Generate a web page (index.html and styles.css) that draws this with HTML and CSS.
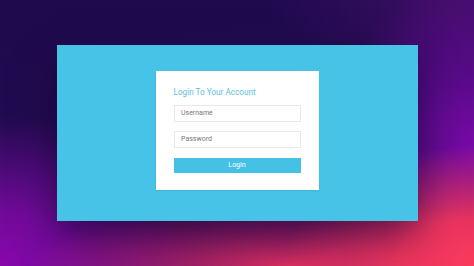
FILE: index.html
```html
<!DOCTYPE html>
<html>
<head>
<meta charset="utf-8">
<link rel="stylesheet" href="styles.css">
</head>
<body>
<div class="bg">
  <div class="panel">
    <form class="card">
      <h2 class="title">Login To Your Account</h2>
      <div class="field">Username</div>
      <div class="field">Password</div>
      <div class="btn">Login</div>
    </form>
  </div>
</div>
</body>
</html>
```
FILE: styles.css
```css
html, body {
  margin: 0;
  padding: 0;
  width: 474px;
  height: 266px;
  overflow: hidden;
}
.bg {
  width: 474px;
  height: 266px;
  box-sizing: border-box;
  padding: 45px 56px 0 56.5px;
  background:
    radial-gradient(ellipse 190px 120px at 474px 266px, #fb3a5c 0%, rgba(245,55,92,0.9) 40%, rgba(220,40,100,0) 100%),
    radial-gradient(ellipse 260px 70px at 290px 266px, rgba(228,48,95,0.95) 0%, rgba(200,35,110,0.5) 60%, rgba(190,30,110,0) 100%),
    radial-gradient(ellipse 200px 150px at 0px 266px, #8807ac 0%, rgba(125,10,165,0.85) 35%, rgba(90,10,140,0) 100%),
    radial-gradient(ellipse 140px 180px at 474px 150px, #7a0aa8 0%, rgba(110,10,160,0.6) 50%, rgba(80,10,130,0) 100%),
    radial-gradient(ellipse 200px 90px at 474px 0px, rgba(70,16,105,0.8) 0%, rgba(60,14,100,0) 100%),
    linear-gradient(170deg, #1f0a4e 0%, #220b50 45%, #3b0e6a 100%);
  font-family: Roboto, "Liberation Sans", sans-serif;
}
.panel {
  width: 361.5px;
  height: 176px;
  background: #46c3e7;
  box-shadow: 0 16px 36px rgba(20, 0, 40, 0.5);
  display: flex;
  justify-content: center;
  align-items: flex-start;
  padding-top: 26px;
  box-sizing: border-box;
}
.card {
  width: 162.5px;
  height: 119px;
  background: #ffffff;
  box-sizing: border-box;
  padding: 16px 18px 0 17.5px;
  margin: 0;
  display: flex;
  flex-direction: column;
  box-shadow: 0 1px 2px rgba(0,0,0,0.08);
}
.title {
  margin: 0 0 7px 0;
  font-weight: 400;
  font-size: 8.2px;
  line-height: 11px;
  color: #62c0dc;
  white-space: nowrap;
}
.field {
  height: 17px;
  border: 1px solid #ebe6ee;
  box-sizing: border-box;
  font-size: 7px;
  line-height: 15px;
  padding-left: 6.5px;
  color: #777777;
  margin-bottom: 9px;
}
.field + .field {
  margin-bottom: 9.5px;
}
.btn {
  height: 15.5px;
  background: #45c1e6;
  color: #ffffff;
  font-size: 7px;
  line-height: 15.5px;
  text-align: center;
}
```
